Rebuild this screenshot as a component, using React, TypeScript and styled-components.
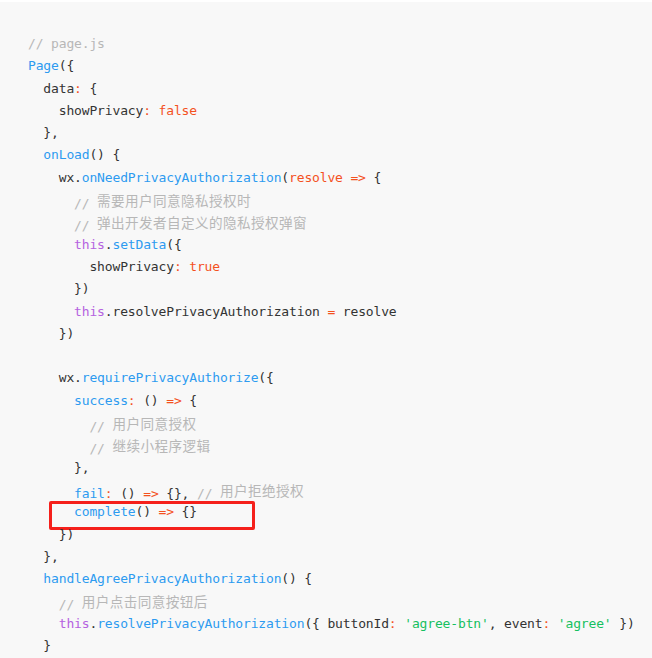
import React from "react";
import styled, { createGlobalStyle } from "styled-components";

const Global = createGlobalStyle`
  html, body { margin: 0; padding: 0; background: #ffffff; }
  #root { min-height: 658px; }
`;

type Kind = "p" | "k" | "o" | "s" | "t" | "c";
type Tok = [Kind, string];

const colors: Record<Kind, string> = {
  p: "#333333",
  k: "#2d9bf0",
  o: "#f4511e",
  s: "#16c060",
  t: "#b562e0",
  c: "#b7b7b7",
};

const Block = styled.pre`
  margin: 2px 0 0 0;
  min-height: 656px;
  box-sizing: border-box;
  background: #f8f8f8;
  padding: 31px 0 0 28px;
  font-family: "DejaVu Sans Mono", "Noto Sans CJK SC", monospace;
  font-size: 13px;
  letter-spacing: -0.15px;
  line-height: 22.3px;
  color: #333333;
  white-space: pre;
  overflow: hidden;
`;

const Line = styled.div<{ $indent: number }>`
  position: relative;
  height: 22.3px;
  padding-left: ${(p) => p.$indent * 7.68}px;
`;

const Token = styled.span<{ $kind: Kind }>`
  color: ${(p) => colors[p.$kind]};
`;

const Cjk = styled.span`
  font-family: "Noto Sans CJK SC", sans-serif;
  font-size: 13.6px;
  letter-spacing: 0.4px;
  vertical-align: 2px;
`;

const Highlight = styled.span`
  position: absolute;
  left: 21px;
  top: 0;
  width: 206px;
  height: 29px;
  box-sizing: border-box;
  border: 3px solid #f5201b;
  border-radius: 2px;
`;

const lines: { i: number; t: Tok[]; box?: boolean }[] = [
  { i: 0, t: [["c", "// page.js"]] },
  { i: 0, t: [["k", "Page"], ["p", "({"]] },
  { i: 2, t: [["p", "data"], ["o", ":"], ["p", " {"]] },
  { i: 4, t: [["p", "showPrivacy"], ["o", ": false"]] },
  { i: 2, t: [["p", "},"]] },
  { i: 2, t: [["k", "onLoad"], ["p", "() {"]] },
  { i: 4, t: [["p", "wx."], ["k", "onNeedPrivacyAuthorization"], ["p", "("], ["o", "resolve =>"], ["p", " {"]] },
  { i: 6, t: [["c", "// 需要用户同意隐私授权时"]] },
  { i: 6, t: [["c", "// 弹出开发者自定义的隐私授权弹窗"]] },
  { i: 6, t: [["t", "this"], ["p", "."], ["k", "setData"], ["p", "({"]] },
  { i: 8, t: [["p", "showPrivacy"], ["o", ": true"]] },
  { i: 6, t: [["p", "})"]] },
  { i: 6, t: [["t", "this"], ["p", ".resolvePrivacyAuthorization "], ["o", "="], ["p", " resolve"]] },
  { i: 4, t: [["p", "})"]] },
  { i: 0, t: [] },
  { i: 4, t: [["p", "wx."], ["k", "requirePrivacyAuthorize"], ["p", "({"]] },
  { i: 6, t: [["k", "success"], ["o", ":"], ["p", " () "], ["o", "=>"], ["p", " {"]] },
  { i: 8, t: [["c", "// 用户同意授权"]] },
  { i: 8, t: [["c", "// 继续小程序逻辑"]] },
  { i: 6, t: [["p", "},"]] },
  { i: 6, t: [["k", "fail"], ["o", ":"], ["p", " () "], ["o", "=>"], ["p", " {}, "], ["c", "// 用户拒绝授权"]] },
  { i: 6, t: [["k", "complete"], ["p", "() "], ["o", "=>"], ["p", " {}"]], box: true },
  { i: 4, t: [["p", "})"]] },
  { i: 2, t: [["p", "},"]] },
  { i: 2, t: [["k", "handleAgreePrivacyAuthorization"], ["p", "() {"]] },
  { i: 4, t: [["c", "// 用户点击同意按钮后"]] },
  {
    i: 4,
    t: [
      ["t", "this"],
      ["p", "."],
      ["k", "resolvePrivacyAuthorization"],
      ["p", "({ buttonId"],
      ["o", ":"],
      ["p", " "],
      ["s", "'agree-btn'"],
      ["p", ", event"],
      ["o", ":"],
      ["p", " "],
      ["s", "'agree'"],
      ["p", " })"],
    ],
  },
  { i: 2, t: [["p", "}"]] },
];

function renderText(text: string) {
  const parts = text.split(/([\u4e00-\u9fff]+)/);
  return parts.map((part, idx) =>
    /[\u4e00-\u9fff]/.test(part) ? <Cjk key={idx}>{part}</Cjk> : <React.Fragment key={idx}>{part}</React.Fragment>
  );
}

export default function App() {
  return (
    <>
      <Global />
      <Block>
        {lines.map((line, li) => (
          <Line key={li} $indent={line.i}>
            {line.box && <Highlight />}
            {line.t.map(([kind, text], ti) => (
              <Token key={ti} $kind={kind}>
                {renderText(text)}
              </Token>
            ))}
          </Line>
        ))}
      </Block>
    </>
  );
}
